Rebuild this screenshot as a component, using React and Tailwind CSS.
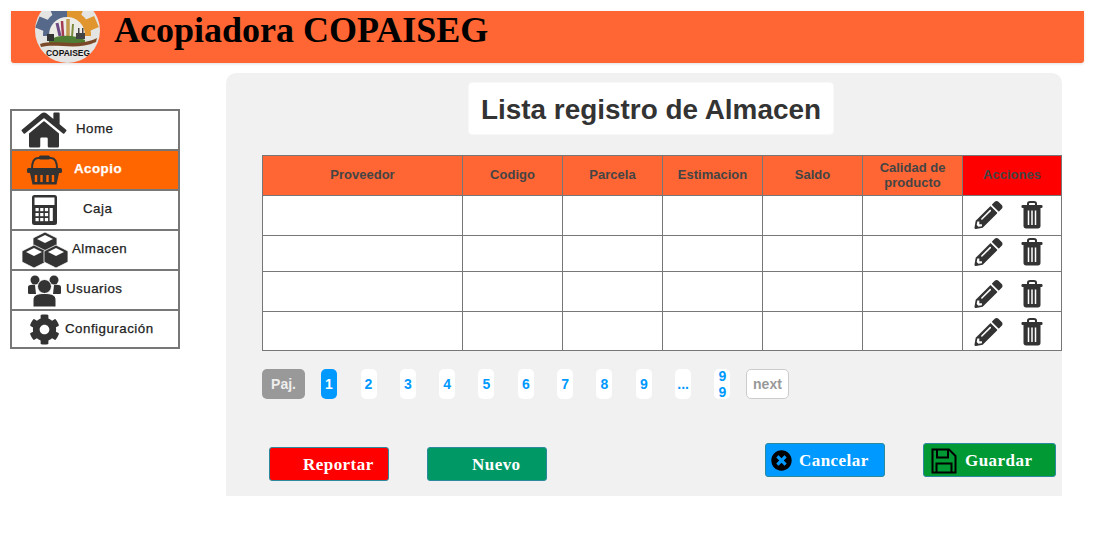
import { FaHome, FaCog, FaPencilAlt, FaTimesCircle } from "react-icons/fa";

const serif = { fontFamily: "'Liberation Serif', serif" };

// Menu rows, padding differs per row like the original page
const menu = [
  { label: "Home", icon: <FaHome className="w-[46px] h-[40px]" />, pad: "pl-[9px]", gap: "gap-[9px]", h: "h-[38px]", lift: "mb-[2px]" },
  { label: "Acopio", icon: <BasketIcon />, pad: "pl-[15px]", gap: "gap-[12px]", h: "h-[40px]", lift: "mb-[2px]", active: true },
  { label: "Caja", icon: <CalculatorIcon />, pad: "pl-[20px]", gap: "gap-[26px]", h: "h-[40px]", lift: "mb-[2px]" },
  { label: "Almacen", icon: <CubesIcon />, pad: "pl-[10px]", gap: "gap-[4px]", h: "h-[40px]", lift: "mb-[2px]" },
  { label: "Usuarios", icon: <UsersIcon />, pad: "pl-[16px]", gap: "gap-[5px]", h: "h-[40px]", lift: "mb-[2px]" },
  { label: "Configuración", icon: <FaCog className="w-[31px] h-[33px]" />, pad: "pl-[17px]", gap: "gap-[5px]", h: "h-[38px]", lift: "mb-0" },
];

const columns = [
  { label: "Proveedor", w: "w-[200px]" },
  { label: "Codigo", w: "w-[100px]" },
  { label: "Parcela", w: "w-[100px]" },
  { label: "Estimacion", w: "w-[100px]" },
  { label: "Saldo", w: "w-[100px]" },
  { label: "Calidad de producto", w: "w-[100px]" },
];

// Row heights and icon offsets are uneven in the original table
const rows = [
  { h: "h-[40px]", offset: "pb-[1px]" },
  { h: "h-[36px]", offset: "pb-[3px]" },
  { h: "h-[40px]", offset: "pt-[5px]" },
  { h: "h-[39px]", offset: "pt-[2px]" },
];
const pages = ["2", "3", "4", "5", "6", "7", "8", "9", "..."];

function BasketIcon() {
  return (
    <svg width="35" height="30" viewBox="0 0 35 30" fill="#333">
      <path d="M5 14 C5 6 7 3 11 3 H24 C28 3 30 6 30 14" fill="none" stroke="#333" strokeWidth="2" />
      <rect x="12" y="0.5" width="11" height="4" rx="1.5" />
      <rect x="0" y="13" width="35" height="5" rx="1.5" />
      <path d="M3 18 H32 L29.5 29.5 H5.5 Z" />
      <path d="M9 20 V27 M14.5 20 V27 M20.5 20 V27 M26 20 V27" stroke="#f60" strokeWidth="2.4" />
    </svg>
  );
}

function CalculatorIcon() {
  const cells = [];
  for (let r = 0; r < 3; r++) {
    for (let c = 0; c < 4; c++) {
      if (c === 3 && r > 0) continue;
      cells.push(<rect key={`${r}-${c}`} x={3.5 + c * 4.7} y={13 + r * 5} width="3.2" height={c === 3 ? 13 : 3.2} fill="#fff" />);
    }
  }
  return (
    <svg width="25" height="30" viewBox="0 0 25 30">
      <rect width="25" height="30" rx="2.5" fill="#333" />
      <rect x="2.5" y="2.5" width="20" height="7.5" fill="#fff" />
      {cells}
    </svg>
  );
}

function CubesIcon() {
  const cube = (x, y) => (
    <g key={`${x}-${y}`}>
      <path d={`M${x} ${y} l12 6 v11 l-12 6 l-12 -6 v-11 Z`} fill="#333" stroke="#fff" strokeWidth="0.8" />
      <path d={`M${x} ${y + 3} l8 4 l-8 4 l-8 -4 Z`} fill="#fff" />
    </g>
  );
  return (
    <svg width="46" height="36" viewBox="0 0 46 36">
      {cube(23, 0)}
      {cube(12, 13)}
      {cube(34, 13)}
    </svg>
  );
}

function UsersIcon() {
  return (
    <svg width="33" height="33" viewBox="0 0 33 33" fill="#333">
      <circle cx="7" cy="6" r="4.5" />
      <circle cx="26" cy="6" r="4.5" />
      <path d="M0 13 C0 11 3 10.5 7 11 L8 20 H1 C0 20 0 19 0 18 Z" />
      <path d="M33 13 C33 11 30 10.5 26 11 L25 20 H32 C33 20 33 19 33 18 Z" />
      <circle cx="16.5" cy="12.5" r="7" stroke="#fff" strokeWidth="1" />
      <path d="M5 32 V26 C5 21 9 19.5 16.5 19.5 C24 19.5 28 21 28 26 V32 C28 33 27 33 26 33 H7 C6 33 5 33 5 32 Z" stroke="#fff" strokeWidth="1" />
    </svg>
  );
}

function TrashIcon() {
  return (
    <svg width="22" height="28" viewBox="0 0 22 28" fill="#333">
      <path d="M7 4 V2.5 C7 1.5 8 1 9 1 H13 C14 1 15 1.5 15 2.5 V4" fill="none" stroke="#333" strokeWidth="2" />
      <rect x="0.5" y="4" width="21" height="3" rx="1" />
      <path d="M2.5 7 H19.5 V25 C19.5 26.5 18.5 27.5 17 27.5 H5 C3.5 27.5 2.5 26.5 2.5 25 Z" />
      <path d="M7.5 9.5 V24 M11 9.5 V24 M14.5 9.5 V24" stroke="#fff" strokeWidth="1.5" />
    </svg>
  );
}

function SaveIcon() {
  return (
    <svg width="26" height="26" viewBox="0 0 26 26" fill="none" stroke="#000" strokeWidth="2">
      <path d="M1.5 1.5 H18 L24.5 8 V24.5 H1.5 Z" />
      <path d="M6 1.5 V9.5 H17 V1.5" />
      <path d="M5.5 24.5 V15.5 H20.5 V24.5" />
    </svg>
  );
}

// Rough drawing of the round cooperative logo
function Logo() {
  const teeth = [0, 45, 90, 135, 180, 225, 270, 315];
  return (
    <svg width="65" height="65" viewBox="0 0 65 65" className="shrink-0 -mt-[13px]">
      <defs>
        <clipPath id="logo-disc"><circle cx="32.5" cy="32.5" r="32.5" /></clipPath>
        <clipPath id="gear-left"><rect x="0" y="0" width="32" height="38" /></clipPath>
        <clipPath id="gear-right"><rect x="32" y="0" width="33" height="38" /></clipPath>
      </defs>
      <g clipPath="url(#logo-disc)">
        <rect width="65" height="65" fill="#e4e4e2" />
        {[["#56698a", "gear-left"], ["#e0952e", "gear-right"]].map(([fill, clip]) => (
          <g key={fill} clipPath={`url(#${clip})`} fill={fill}>
            <circle cx="32" cy="36" r="24" />
            {teeth.map((a) => (
              <rect key={a} x="26" y="4" width="12" height="12" transform={`rotate(${a + 22} 32 36)`} />
            ))}
          </g>
        ))}
        <circle cx="32" cy="37" r="18" fill="#ecebe6" />
        <path d="M25 38 L22 25" stroke="#6d4a86" strokeWidth="3" />
        <path d="M28 38 L27 23" stroke="#a23b52" strokeWidth="2.5" />
        <path d="M33 39 L33 21" stroke="#c19a4d" strokeWidth="3.5" />
        <path d="M37 39 L38 26" stroke="#7c8a3c" strokeWidth="2" />
        <path d="M14 42 C22 37 38 36 50 42 V46 H14 Z" fill="#4f7d33" />
        <rect x="12" y="36" width="7" height="7" fill="#333" />
        <rect x="41" y="35" width="9" height="6" fill="#444" />
        <rect x="43" y="30" width="1.5" height="6" fill="#444" />
        <rect x="47" y="30" width="1.5" height="6" fill="#444" />
        <path d="M5 46 C22 41 42 50 62 40 L61 44 C42 53 22 45 6 49 Z" fill="#7a4a28" />
        <text x="11" y="58" textLength="44" lengthAdjust="spacingAndGlyphs" fontSize="9.5" fontWeight="700" fill="#111" fontFamily="'Liberation Sans', sans-serif">COPAISEG</text>
      </g>
    </svg>
  );
}

function ActionButton({ className, children }) {
  return (
    <button
      className={`flex items-center h-[34px] pt-[1px] rounded-[3px] border border-[#2b8a9e] text-white font-bold text-[17px] tracking-[0.45px] ${className}`}
      style={serif}
    >
      {children}
    </button>
  );
}

export default function App() {
  return (
    <div className="w-[1094px] h-[550px] bg-white overflow-hidden pt-[11px] text-[#333]" style={{ fontFamily: "'Liberation Sans', sans-serif" }}>
      {/* Header bar */}
      <header className="ml-[11px] w-[1073px] h-[52px] bg-[#ff6633] rounded-b-[3px] shadow-[0_1px_3px_rgba(0,0,0,0.12)] overflow-hidden flex items-start pl-[24px]">
        <Logo />
        <h1 className="ml-[14px] -mt-[1px] text-[36px] leading-[40px] font-bold text-black" style={serif}>Acopiadora COPAISEG</h1>
      </header>

      <div className="flex items-start mt-[10px] ml-[10px]">
        {/* Side menu */}
        <nav className="w-[170px] mt-[36px] border-2 border-[#777] flex flex-col">
          {menu.map((item, i) => (
            <div
              key={item.label}
              className={`flex items-center ${item.h} ${item.pad} ${item.gap} ${i > 0 ? "border-t-2 border-[#777]" : ""} ${item.active ? "bg-[#ff6600] text-white font-bold" : "text-[#222]"}`}
            >
              <span className="text-[#333]">{item.icon}</span>
              <span className={`text-[13.3px] tracking-[0.5px] [-webkit-text-stroke:0.25px] ${item.lift}`}>{item.label}</span>
            </div>
          ))}
        </nav>

        {/* Main panel */}
        <main className="ml-[46px] w-[836px] h-[423px] bg-[#f1f1f1] rounded-t-[10px] pt-[9px]">
          <h2 className="ml-[242px] w-[366px] h-[53px] pt-[3px] bg-white border border-[#f8f8f8] rounded-[4px] flex items-center justify-center text-[27.9px] font-bold text-[#333]">Lista registro de Almacen</h2>

          <table className="ml-[36px] mt-[20px] w-[800px] table-fixed border-collapse">
            <thead>
              <tr className="h-[40px]">
                {columns.map((col) => (
                  <th key={col.label} className={`${col.w} border border-[#777] bg-[#ff6633] text-[13px] leading-[15px] font-bold text-[#444] px-2 pb-[2px]`}>{col.label}</th>
                ))}
                <th className="border border-[#777] bg-[#ff0000] text-[13px] leading-[15px] font-bold text-[#444] pb-[2px]">Acciones</th>
              </tr>
            </thead>
            <tbody>
              {rows.map((row, i) => (
                <tr key={i} className={row.h}>
                  {columns.map((col) => (
                    <td key={col.label} className="border border-[#777] bg-white" />
                  ))}
                  <td className="border border-[#777] bg-white p-0">
                    <div className={`flex items-center pl-[11px] gap-[18px] ${row.offset}`}>
                      <FaPencilAlt className="w-[29px] h-[28px]" />
                      <TrashIcon />
                    </div>
                  </td>
                </tr>
              ))}
            </tbody>
          </table>

          {/* Pagination */}
          <div className="flex items-center ml-[36px] mt-[18px] h-[30px] text-[14px] font-bold">
            <span className="w-[43px] h-[30px] rounded-[5px] bg-[#999] text-[#eee] flex items-center justify-center">Paj.</span>
            <span className="ml-[16px] w-[16px] h-[30px] rounded-[5px] bg-[#0099ff] text-white flex items-center justify-center">1</span>
            <div className="ml-[23.5px] flex gap-[23.33px]">
              {pages.map((p) => (
                <span key={p} className="w-[16px] h-[30px] rounded-[5px] bg-white text-[#0099ff] flex items-center justify-center">{p}</span>
              ))}
              <span className="w-[16px] h-[30px] px-[3px] rounded-[5px] bg-white text-[#0099ff] text-center leading-[15.5px] break-all">99</span>
            </div>
            <span className="ml-[15.5px] w-[43px] h-[30px] rounded-[5px] bg-white border border-[#ccc] text-[#999] flex items-center justify-center">next</span>
          </div>

          {/* Buttons */}
          <div className="flex items-start ml-[43px] mt-[44px]">
            <ActionButton className="mt-[4px] w-[120px] bg-[#ff0000] pl-[33px]">Reportar</ActionButton>
            <ActionButton className="mt-[4px] ml-[38px] w-[120px] bg-[#009966] pl-[44px]">Nuevo</ActionButton>
            <ActionButton className="ml-[218px] w-[120px] bg-[#0099ff] pl-[5px] gap-[7px]">
              <FaTimesCircle className="w-[21px] h-[21px] text-black" />
              Cancelar
            </ActionButton>
            <ActionButton className="ml-[38px] w-[133px] bg-[#009933] pl-[7px] gap-[8px]">
              <SaveIcon />
              Guardar
            </ActionButton>
          </div>
        </main>
      </div>
    </div>
  );
}
